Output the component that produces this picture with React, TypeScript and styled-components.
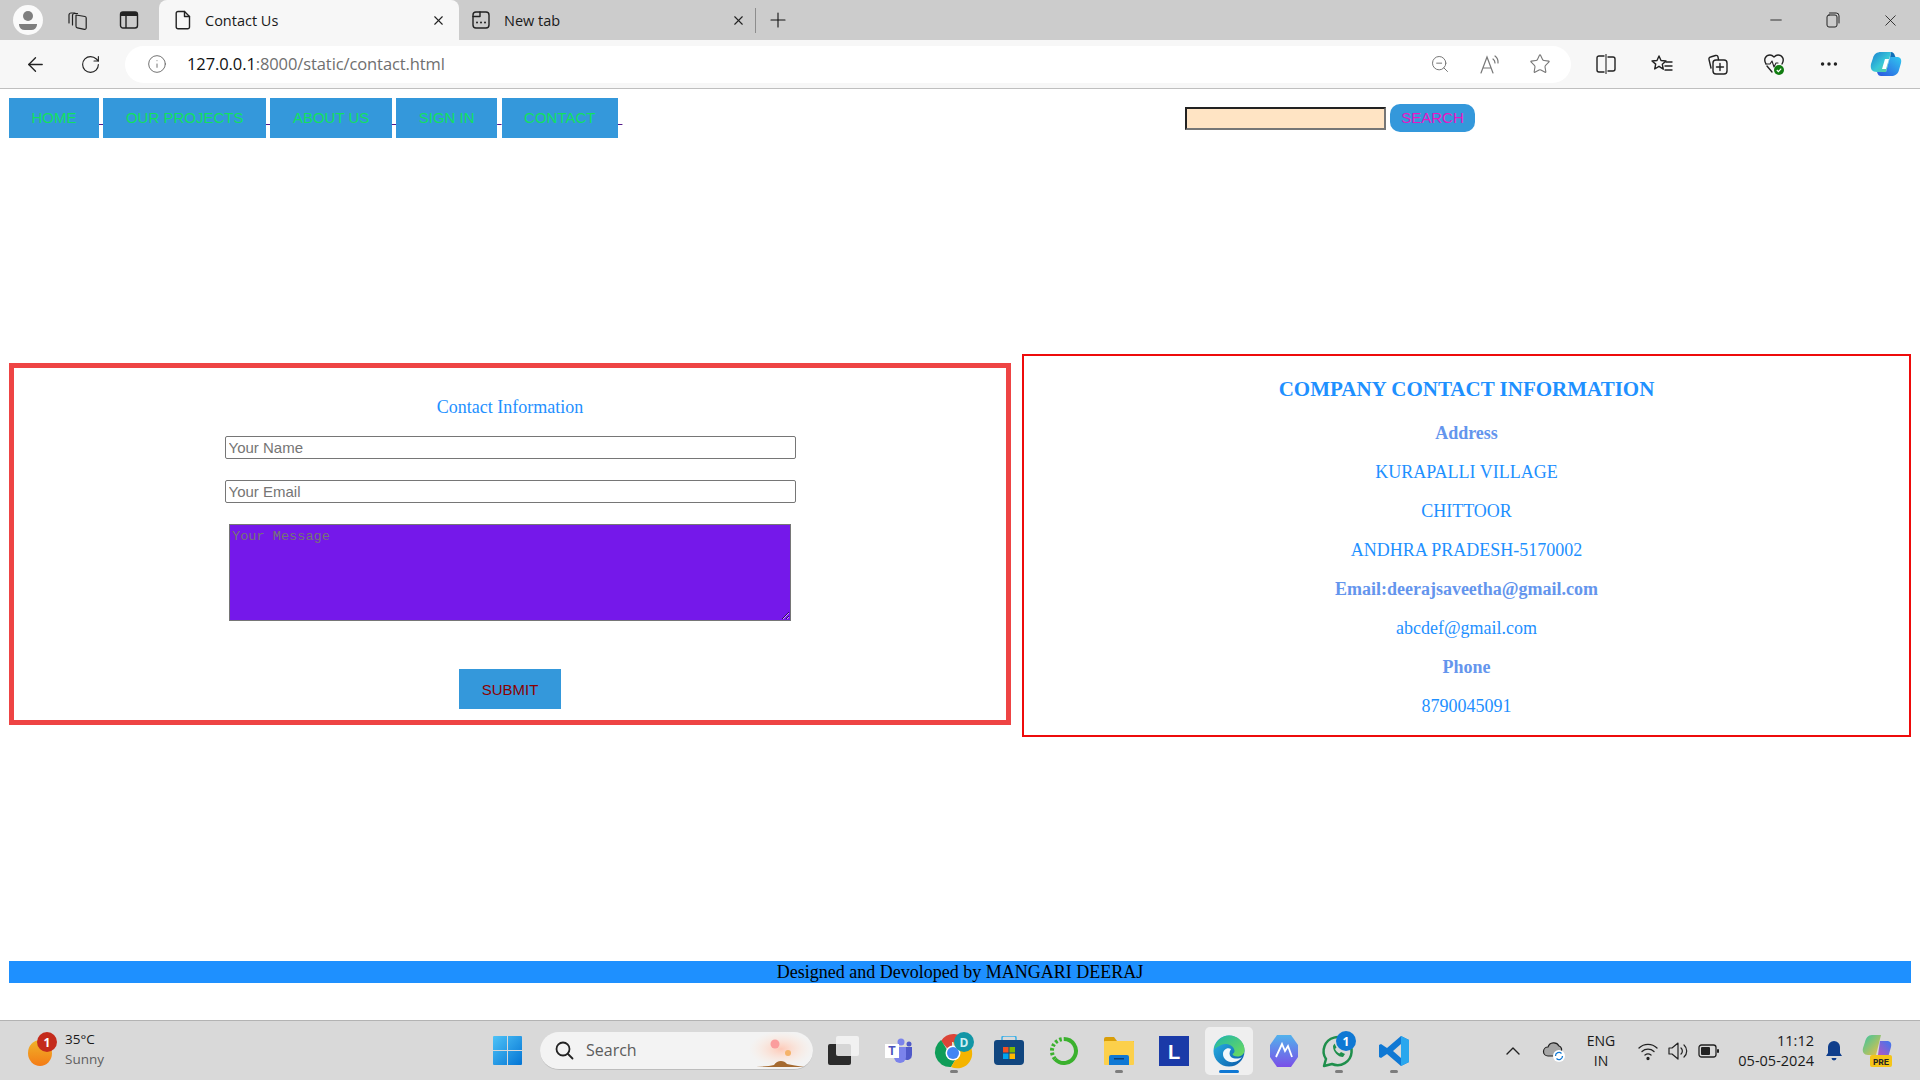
import styled, { createGlobalStyle } from 'styled-components';
import { ArrowLeft, Info, Minus, MoreHorizontal, Plus, RotateCw, Star, X, ZoomOut } from 'lucide-react';

const GlobalStyle = createGlobalStyle`
  html, body {
    margin: 0;
    padding: 0;
    height: 100%;
    background: #fff;
  }
  #root {
    height: 100%;
  }
  * {
    box-sizing: border-box;
  }
`;

const Screen = styled.div`
  width: 1920px;
  height: 1080px;
  display: flex;
  flex-direction: column;
  overflow: hidden;
  font-family: 'Liberation Serif', serif;
`;

/* browser chrome */
const TabBar = styled.div`
  height: 40px;
  background: #ccc;
  display: flex;
  align-items: center;
  padding-left: 3px;
  font-family: 'Open Sans', sans-serif;
`;

const Slot = styled.div<{ $w: number; $ml?: number }>`
  width: ${(p) => p.$w}px;
  margin-left: ${(p) => p.$ml ?? 0}px;
  flex: none;
  display: flex;
  align-items: center;
  justify-content: center;
  position: relative;
`;

const Tab = styled.div<{ $active?: boolean }>`
  width: ${(p) => (p.$active ? 300 : 294)}px;
  height: 40px;
  flex: none;
  display: flex;
  align-items: center;
  margin-left: ${(p) => (p.$active ? 4 : 1)}px;
  padding: ${(p) => (p.$active ? '0 13px 0 16px' : '0 8px 0 12px')};
  background: ${(p) => (p.$active ? '#f7f7f7' : 'transparent')};
  border-radius: 8px 8px 0 0;
  font-size: 14.5px;
  color: #1a1a1a;
`;

const TabLabel = styled.span`
  margin-left: 14px;
  flex: 1;
`;

const TabDivider = styled.div`
  width: 1px;
  height: 25px;
  background: #8d8d8d;
  margin-left: 1px;
`;

const WindowControls = styled.div`
  margin-left: auto;
  display: flex;
  padding-right: 1px;
`;

const Toolbar = styled.div`
  height: 49px;
  background: #f7f7f7;
  border-bottom: 1px solid #bfbfbf;
  display: flex;
  align-items: center;
  padding: 0 4px 0 8px;
  font-family: 'Open Sans', sans-serif;
`;

const AddressPill = styled.div`
  flex: 1;
  height: 37px;
  margin: 0 7px;
  background: #fff;
  border-radius: 19px;
  display: flex;
  align-items: center;
  padding: 0 6px 0 20px;
`;

const Url = styled.div`
  margin-left: 18px;
  padding-bottom: 1px;
  flex: 1;
  font-size: 16.5px;
  letter-spacing: -0.1px;
  color: #6f6f6f;
`;

const UrlHost = styled.span`
  color: #111;
`;

/* page */
const Page = styled.main`
  flex: 1;
  display: flex;
  flex-direction: column;
  padding: 9px 9px 0;
`;

const Header = styled.header`
  display: flex;
  align-items: center;
  height: 40px;
`;

const Nav = styled.nav`
  width: 1176px;
  flex: none;
  white-space: pre;
  font-family: 'Liberation Sans', sans-serif;
  font-size: 16px;
`;

const NavLink = styled.a`
  color: #551a8b;
  text-decoration: underline;
`;

const NavButton = styled.span`
  display: inline-block;
  padding: 11px 22.5px;
  height: 40px;
  line-height: 18px;
  background: #3498db;
  color: #12e05f;
  font-size: 15px;
`;

const SearchInput = styled.input`
  width: 201px;
  height: 23px;
  background: #ffe4c4;
  border: 2px solid;
  border-color: #222 #767676 #767676 #222;
  padding: 0 2px;
`;

const SearchButton = styled.button`
  width: 85px;
  height: 28px;
  margin-left: 4px;
  border: none;
  border-radius: 10px;
  background: #3498db;
  color: #e815c4;
  font-family: 'Liberation Sans', sans-serif;
  font-size: 15px;
  padding: 0 0 2px;
`;

const Panels = styled.div`
  margin-top: 216px;
  display: flex;
  align-items: flex-start;
  gap: 11px;
`;

const FormPanel = styled.form`
  width: 1002px;
  height: 362px;
  margin-top: 9px;
  flex: none;
  border: 5px solid #ee4444;
  display: flex;
  flex-direction: column;
  align-items: center;
  padding-top: 29px;
`;

const FormTitle = styled.h4`
  margin: 0;
  height: 21px;
  line-height: 21px;
  font-size: 18px;
  font-weight: 400;
  color: #1e90ff;
`;

const TextField = styled.input<{ $top: number }>`
  width: 571px;
  height: 23px;
  margin-top: ${(p) => p.$top}px;
  flex: none;
  border: 1px solid #767676;
  border-radius: 2px;
  padding: 0 3px;
  background: #fff;
  font-family: 'Liberation Sans', sans-serif;
  font-size: 15px;

  &::placeholder {
    color: #757575;
  }
`;

const MessageBox = styled.textarea`
  width: 562px;
  height: 97px;
  margin-top: 21px;
  flex: none;
  display: block;
  border: 1px solid #767676;
  border-radius: 0;
  padding: 4px 2px;
  background: #7518ea;
  font-family: 'Liberation Mono', monospace;
  font-size: 13.6px;

  &::placeholder {
    color: #757575;
  }
`;

const SubmitButton = styled.button`
  width: 102px;
  height: 40px;
  margin-top: 48px;
  flex: none;
  border: none;
  padding: 0;
  background: #3498db;
  color: #8b0000;
  font-family: 'Liberation Sans', sans-serif;
  font-size: 15px;
`;

const InfoPanel = styled.section`
  width: 889px;
  height: 383px;
  flex: none;
  border: 2px solid #ee0b0b;
  display: flex;
  flex-direction: column;
  align-items: center;
  padding-top: 20px;
`;

const InfoTitle = styled.h3`
  margin: 0 0 12px;
  height: 26px;
  line-height: 26px;
  font-size: 21px;
  font-weight: 700;
  color: #1e90ff;
`;

const InfoLine = styled.p<{ $strong?: boolean }>`
  margin: 9px 0;
  height: 21px;
  line-height: 21px;
  font-size: 18px;
  font-weight: ${(p) => (p.$strong ? 700 : 400)};
  color: ${(p) => (p.$strong ? '#6495ed' : '#1e90ff')};
`;

const Footer = styled.footer`
  margin-top: 224px;
  height: 22px;
  line-height: 23px;
  background: #1e90ff;
  color: #000;
  text-align: center;
  font-size: 18px;
`;

/* taskbar */
const Taskbar = styled.div`
  height: 60px;
  flex: none;
  background: #d9d9d9;
  border-top: 1px solid #b3b3b3;
  display: flex;
  align-items: center;
  font-family: 'Open Sans', sans-serif;
  color: #1a1a1a;
`;

const Weather = styled.div`
  width: 493px;
  flex: none;
  display: flex;
  align-items: center;
  padding-left: 28px;
`;

const WeatherText = styled.div`
  margin-left: 13px;
  padding-bottom: 3px;
  font-size: 13.5px;
  line-height: 20px;
`;

const Muted = styled.div`
  color: #5f5f5f;
`;

const StartSlot = styled.div`
  width: 47px;
  flex: none;
`;

const SearchPill = styled.div`
  width: 273px;
  height: 38px;
  flex: none;
  margin-right: 3px;
  border-radius: 19px;
  background: #f3f3f3;
  border-bottom: 1px solid #bdbdbd;
  display: flex;
  align-items: center;
  padding-left: 14px;
  font-size: 16px;
  color: #5c5c5c;
  overflow: hidden;
`;

const SearchLabel = styled.span`
  margin-left: 12px;
  flex: 1;
`;

const AppSlot = styled.div<{ $active?: boolean }>`
  width: 55px;
  height: 48px;
  flex: none;
  display: flex;
  align-items: center;
  justify-content: center;
  position: relative;

  ${(p) =>
    p.$active &&
    `
    &::before {
      content: '';
      position: absolute;
      left: 4px;
      right: 3px;
      top: 0;
      bottom: 0;
      background: #efefef;
      border-radius: 5px;
    }
  `}

  & > svg {
    position: relative;
  }
`;

const RunDot = styled.span<{ $active?: boolean }>`
  position: absolute;
  bottom: 2px;
  left: 50%;
  width: ${(p) => (p.$active ? 20 : 8)}px;
  height: 3px;
  margin-left: ${(p) => (p.$active ? -10 : -4)}px;
  border-radius: 2px;
  background: ${(p) => (p.$active ? '#0f78d4' : '#7d7d7d')};
`;

const Tray = styled.div`
  display: flex;
  align-items: center;
  margin-left: 78px;
`;

const TrayText = styled.div<{ $w: number; $ml: number; $right?: boolean; $size: number }>`
  width: ${(p) => p.$w}px;
  margin-left: ${(p) => p.$ml}px;
  flex: none;
  text-align: ${(p) => (p.$right ? 'right' : 'center')};
  font-size: ${(p) => p.$size}px;
  line-height: 20px;
  white-space: nowrap;
`;

const line = { fill: 'none', stroke: '#222', strokeWidth: 1.4, strokeLinecap: 'round', strokeLinejoin: 'round' } as const;

const App: React.FC = () => {
  return (
    <Screen>
      <GlobalStyle />
      <TabBar>
        <Slot $w={50}>
          <svg width="30" height="30" viewBox="0 0 30 30">
            <circle cx="15" cy="15" r="15" fill="#fafafa" />
            <circle cx="15" cy="11" r="5" fill="#7f7f7f" />
            <path d="M6 19h18v1a6 6 0 0 1-6 5h-6a6 6 0 0 1-6-5z" fill="#7f7f7f" />
          </svg>
        </Slot>
        <Slot $w={50}>
          <svg width="24" height="24" viewBox="0 0 24 24" {...line} strokeWidth={1.2}>
            <path d="M3 15V7a2 2 0 0 1 2-2h4" />
            <path d="M6.500 17V7.500a2 2 0 0 1 2-2h3" />
            <path d="M10 7l9 1.500a1.500 1.500 0 0 1 1.200 1.500v10a1.500 1.500 0 0 1-1.800 1.400l-7-1.500a1.800 1.800 0 0 1-1.400-1.700z" />
          </svg>
        </Slot>
        <Slot $w={52}>
          <svg width="20" height="20" viewBox="0 0 20 20">
            <rect x="1.500" y="2" width="17" height="16" rx="2.500" fill="none" stroke="#222" strokeWidth="1.400" />
            <path d="M2 4a2 2 0 0 1 2-2h12a2 2 0 0 1 2 2v2H2z" fill="#222" />
            <path d="M7 6v12" stroke="#222" strokeWidth="1.400" />
          </svg>
        </Slot>
        <Tab $active>
          <svg width="16" height="20" viewBox="0 0 16 20" {...line}>
            <path d="M3 1.500h6.500l5 5V17a1.800 1.800 0 0 1-1.800 1.800H3A1.800 1.800 0 0 1 1.200 17V3.300A1.800 1.800 0 0 1 3 1.500z" />
            <path d="M9.500 1.500v5h5" />
          </svg>
          <TabLabel>Contact Us</TabLabel>
          <X size={15} strokeWidth={1.8} color="#222" />
        </Tab>
        <Tab>
          <svg width="18" height="18" viewBox="0 0 18 18" {...line}>
            <rect x="1" y="1" width="16" height="16" rx="3" />
            <path d="M1 5.500h7V1" />
            <path d="M5 11.500h.01M9 11.500h.01M13 11.500h.01" strokeWidth="2" />
          </svg>
          <TabLabel>New tab</TabLabel>
          <X size={15} strokeWidth={1.8} color="#222" />
        </Tab>
        <TabDivider />
        <Slot $w={44}>
          <Plus size={24} strokeWidth={1.1} color="#111" />
        </Slot>
        <WindowControls>
          <Slot $w={57}>
            <Minus size={18} strokeWidth={1.1} color="#111" />
          </Slot>
          <Slot $w={57}>
            <svg width="14" height="16" viewBox="0 0 14 16" {...line} strokeWidth={1}>
              <rect x="1" y="3" width="10" height="12" rx="2" />
              <path d="M3.500 1h6.700A2.800 2.800 0 0 1 13 3.800V11" />
            </svg>
          </Slot>
          <Slot $w={58}>
            <X size={19} strokeWidth={1} color="#111" />
          </Slot>
        </WindowControls>
      </TabBar>

      <Toolbar>
        <Slot $w={55}>
          <ArrowLeft size={23} strokeWidth={1.4} color="#222" />
        </Slot>
        <Slot $w={55}>
          <RotateCw size={21} strokeWidth={1.3} color="#222" />
        </Slot>
        <AddressPill>
          <Slot $w={24}>
            <Info size={20} strokeWidth={1.1} color="#666" />
          </Slot>
          <Url>
            <UrlHost>127.0.0.1</UrlHost>:8000/static/contact.html
          </Url>
          <Slot $w={50}>
            <ZoomOut size={20} strokeWidth={1.2} color="#777" />
          </Slot>
          <Slot $w={50}>
            <svg width="22" height="22" viewBox="0 0 22 22" fill="none" stroke="#777" strokeWidth="1.200" strokeLinecap="round">
              <path d="M2 20L8 4l6 16M4 15h8" />
              <path d="M14 6a5 5 0 0 1 2 4M16 3a8 8 0 0 1 3 7" />
            </svg>
          </Slot>
          <Slot $w={50}>
            <Star size={22} strokeWidth={1.2} color="#777" />
          </Slot>
        </AddressPill>
        <Slot $w={56}>
          <svg width="20" height="20" viewBox="0 0 20 20" {...line}>
            <path d="M8 2H3a2 2 0 0 0-2 2v12a2 2 0 0 0 2 2h5M12 3h5a2 2 0 0 1 2 2v10a2 2 0 0 1-2 2h-5" />
            <path d="M10 0v20" stroke="#555" />
          </svg>
        </Slot>
        <Slot $w={56}>
          <svg width="22" height="22" viewBox="0 0 22 22" {...line}>
            <path d="M8 3l2 4.500 5 .5-3.700 3.300 1 4.900L8 13.300 3.700 16l1-4.900L1 8l5-.5z" />
            <path d="M15 9h6M14 13h7M14 17h7" />
          </svg>
        </Slot>
        <Slot $w={56}>
          <svg width="22" height="22" viewBox="0 0 22 22" {...line}>
            <path d="M4 15l-2-8.500A2 2 0 0 1 3.500 4l5-1.500a2 2 0 0 1 2.500 1.500l.5 2.500" />
            <rect x="6" y="7" width="14" height="14" rx="3" />
            <path d="M13 10.500v7M9.500 14h7" />
          </svg>
        </Slot>
        <Slot $w={55}>
          <svg width="22" height="24" viewBox="0 0 22 24">
            <path d="M3 12C0 7 3 3 7 3c2 0 3 1 4 2 1-1 2-2 4-2 4 0 7 4 4 9M9 20l-5-6" {...line} />
            <path d="M3 12h4l2-3 2 6 2-4h2" {...line} strokeWidth={1.1} />
            <circle cx="16" cy="18" r="5" fill="#107c10" />
            <path d="M13.800 18l1.600 1.600 2.800-3" fill="none" stroke="#fff" strokeWidth="1.200" />
          </svg>
        </Slot>
        <Slot $w={55}>
          <MoreHorizontal size={22} strokeWidth={1.8} color="#222" />
        </Slot>
        <Slot $w={60}>
          <svg width="32" height="32" viewBox="0 0 32 32">
            <defs>
              <linearGradient id="cpA" x1="0" y1="0" x2="1" y2="1">
                <stop offset="0" stopColor="#1a7fd0" />
                <stop offset="0.55" stopColor="#38c6d8" />
                <stop offset="1" stopColor="#5fd38a" />
              </linearGradient>
              <linearGradient id="cpB" x1="1" y1="0" x2="0" y2="1">
                <stop offset="0" stopColor="#30c8f0" />
                <stop offset="1" stopColor="#2b55e0" />
              </linearGradient>
            </defs>
            <path d="M11 4h10l-5 20H7C2 24 0 21 1 16l2-6c1-4 4-6 8-6z" fill="url(#cpA)" />
            <path d="M21 4c2 0 3 1 4 4l1 2h-6z" fill="#0f6fb8" />
            <path d="M20 9h7c3 0 5 2 4 6l-2 7c-1 4-4 6-8 6H11c-2 0-3-1-4-4h9z" fill="url(#cpB)" />
            <path d="M15 11h4l-3 10h-4z" fill="#fff" />
          </svg>
        </Slot>
      </Toolbar>

      <Page>
        <Header>
          <Nav>
            <NavLink href="#home"><NavButton>HOME</NavButton>{' '}</NavLink>
            <NavLink href="#projects"><NavButton>OUR PROJECTS</NavButton>{' '}</NavLink>
            <NavLink href="#about"><NavButton>ABOUT US</NavButton>{' '}</NavLink>
            <NavLink href="#signin"><NavButton>SIGN IN</NavButton>{' '}</NavLink>
            <NavLink href="#contact"><NavButton>CONTACT</NavButton>{' '}</NavLink>
          </Nav>
          <SearchInput type="text" />
          <SearchButton type="button">SEARCH</SearchButton>
        </Header>

        <Panels>
          <FormPanel>
            <FormTitle>Contact Information</FormTitle>
            <TextField $top={18} type="text" placeholder="Your Name" />
            <TextField $top={21} type="email" placeholder="Your Email" />
            <MessageBox placeholder="Your Message" />
            <SubmitButton type="button">SUBMIT</SubmitButton>
          </FormPanel>
          <InfoPanel>
            <InfoTitle>COMPANY CONTACT INFORMATION</InfoTitle>
            <InfoLine $strong>Address</InfoLine>
            <InfoLine>KURAPALLI VILLAGE</InfoLine>
            <InfoLine>CHITTOOR</InfoLine>
            <InfoLine>ANDHRA PRADESH-5170002</InfoLine>
            <InfoLine $strong>Email:deerajsaveetha@gmail.com</InfoLine>
            <InfoLine>abcdef@gmail.com</InfoLine>
            <InfoLine $strong>Phone</InfoLine>
            <InfoLine>8790045091</InfoLine>
          </InfoPanel>
        </Panels>

        <Footer>Designed and Devoloped by MANGARI DEERAJ</Footer>
      </Page>

      <Taskbar>
        <Weather>
          <Slot $w={24}>
            <svg width="28" height="36" viewBox="0 0 28 36" style={{ overflow: 'visible' }}>
              <defs>
                <linearGradient id="sun" x1="0" y1="0" x2="0" y2="1">
                  <stop offset="0" stopColor="#f0b429" />
                  <stop offset="1" stopColor="#f47b16" />
                </linearGradient>
              </defs>
              <ellipse cx="14" cy="20" rx="12" ry="13" fill="url(#sun)" />
              <circle cx="21" cy="9" r="10" fill="#c42b1c" />
              <text x="21" y="13.500" textAnchor="middle" fontSize="12" fontWeight="700" fill="#fff" fontFamily="'Open Sans', sans-serif">1</text>
            </svg>
          </Slot>
          <WeatherText>
            35°C
            <Muted>Sunny</Muted>
          </WeatherText>
        </Weather>
        <StartSlot>
          <svg width="29" height="29" viewBox="0 0 29 29" style={{ display: 'block' }}>
            <defs>
              <linearGradient id="win" x1="0" y1="0" x2="1" y2="1">
                <stop offset="0" stopColor="#4fc3f7" />
                <stop offset="1" stopColor="#0374d4" />
              </linearGradient>
            </defs>
            <path d="M0 1a1 1 0 0 1 1-1h13v14H0zM15 0h13a1 1 0 0 1 1 1v13H15zM0 15h14v14H1a1 1 0 0 1-1-1zM15 15h14v13a1 1 0 0 1-1 1H15z" fill="url(#win)" />
          </svg>
        </StartSlot>
        <SearchPill>
          <svg width="20" height="20" viewBox="0 0 20 20" fill="none" stroke="#222" strokeWidth="1.800" strokeLinecap="round">
            <circle cx="9" cy="9" r="6.500" />
            <path d="M14 14l4.500 4.500" />
          </svg>
          <SearchLabel>Search</SearchLabel>
          <svg width="70" height="38" viewBox="0 0 70 38">
            <defs>
              <radialGradient id="glow">
                <stop offset="0" stopColor="#ffc4b0" stopOpacity="0.9" />
                <stop offset="1" stopColor="#ffe8d8" stopOpacity="0" />
              </radialGradient>
            </defs>
            <ellipse cx="38" cy="18" rx="32" ry="18" fill="url(#glow)" />
            <circle cx="32" cy="13" r="4.500" fill="#fb9d9d" />
            <circle cx="45" cy="22" r="3" fill="#f5b36a" />
            <path d="M13 36c8-.5 14-1 18-2 3-5 10-5 13-1 5 1 10 2 18 3z" fill="#a56a30" />
          </svg>
        </SearchPill>
        <AppSlot>
          <svg width="32" height="30" viewBox="0 0 32 30">
            <rect x="0" y="8" width="23" height="21" rx="2" fill="#2b2b2b" />
            <rect x="8" y="0" width="23" height="20" rx="2" fill="#f4f4f4" fillOpacity="0.85" />
          </svg>
        </AppSlot>
        <AppSlot>
          <svg width="28" height="26" viewBox="0 0 28 26">
            <circle cx="16" cy="4" r="3.500" fill="#7b83eb" />
            <circle cx="24" cy="6" r="2.500" fill="#5059c9" />
            <path d="M19 9h8v8a5 5 0 0 1-8 4z" fill="#5059c9" />
            <path d="M9 9h12v10a6 6 0 0 1-12 0z" fill="#7b83eb" />
            <rect x="0" y="6" width="14" height="14" fill="#fff" />
            <text x="7" y="17" textAnchor="middle" fontSize="12" fontWeight="700" fill="#4b53bc" fontFamily="'Liberation Sans', sans-serif">T</text>
          </svg>
        </AppSlot>
        <AppSlot>
          <svg width="36" height="36" viewBox="0 0 36 36" style={{ overflow: 'visible' }}>
            <path d="M16 21L5 8a15 15 0 0 1 26 1H16z" fill="#db4437" />
            <path d="M13 20L5 7a15 15 0 0 0 10 27l6-10z" fill="#0f9d58" />
            <path d="M17 9h14a15 15 0 0 1-16 25l8-13z" fill="#f4b400" />
            <circle cx="17" cy="20" r="7.500" fill="#fff" />
            <circle cx="17" cy="20" r="6" fill="#4285f4" />
            <circle cx="28" cy="9" r="10" fill="#1296a6" />
            <text x="28" y="13.500" textAnchor="middle" fontSize="12" fontWeight="700" fill="#cdeff3" fontFamily="'Open Sans', sans-serif">D</text>
          </svg>
          <RunDot />
        </AppSlot>
        <AppSlot>
          <svg width="30" height="30" viewBox="0 0 30 30">
            <path d="M8 5V2a2 2 0 0 1 2-2h10a2 2 0 0 1 2 2v3" fill="none" stroke="#3bb0e8" strokeWidth="1.500" />
            <path d="M0 7a3 3 0 0 1 3-3h24a3 3 0 0 1 3 3v18a4 4 0 0 1-4 4H4a4 4 0 0 1-4-4z" fill="#11467f" />
            <rect x="9" y="11" width="5.500" height="5.500" fill="#f25022" />
            <rect x="15.500" y="11" width="5.500" height="5.500" fill="#7fba00" />
            <rect x="9" y="17.500" width="5.500" height="5.500" fill="#00a4ef" />
            <rect x="15.500" y="17.500" width="5.500" height="5.500" fill="#ffb900" />
          </svg>
        </AppSlot>
        <AppSlot>
          <svg width="30" height="30" viewBox="0 0 30 30" fill="none">
            <path d="M15 3a12 12 0 1 1-9 20" stroke="#3bb12e" strokeWidth="4" />
            <path d="M6 23A12 12 0 0 1 15 3" stroke="#3bb12e" strokeWidth="4" strokeDasharray="2.500 2" />
          </svg>
        </AppSlot>
        <AppSlot>
          <svg width="30" height="28" viewBox="0 0 30 28">
            <path d="M0 2a2 2 0 0 1 2-2h8l3 4h17v4H0z" fill="#d99e09" />
            <rect x="0" y="4" width="30" height="24" rx="1" fill="#fcd04b" />
            <path d="M5 20a2 2 0 0 1 2-2h16a2 2 0 0 1 2 2v8H5z" fill="#0f78d4" />
            <rect x="10" y="21" width="10" height="1.500" fill="#0b3f75" />
          </svg>
          <RunDot />
        </AppSlot>
        <AppSlot>
          <svg width="30" height="30" viewBox="0 0 30 30">
            <rect width="30" height="30" fill="#1a3aa8" />
            <text x="15" y="23" textAnchor="middle" fontSize="20" fontWeight="700" fill="#fff" fontFamily="'Liberation Sans', sans-serif">L</text>
          </svg>
        </AppSlot>
        <AppSlot $active>
          <svg width="32" height="32" viewBox="0 0 32 32">
            <defs>
              <linearGradient id="edgeA" x1="0" y1="0" x2="1" y2="1">
                <stop offset="0" stopColor="#1fb6a8" />
                <stop offset="1" stopColor="#6fdc5a" />
              </linearGradient>
              <linearGradient id="edgeB" x1="0" y1="0" x2="1" y2="1">
                <stop offset="0" stopColor="#2bb8e8" />
                <stop offset="1" stopColor="#0a58a8" />
              </linearGradient>
            </defs>
            <circle cx="16" cy="16" r="15.500" fill="url(#edgeB)" />
            <path d="M1 15C2 6 9 .5 16 .5c9 0 15.500 7 15.500 14.500 0 4-3 6.500-7 6.500-3 0-5-1-5-2.500 2-1 2.500-3 1.500-5C19 9 12 8 8 10c-3 1.500-6 3-7 5z" fill="url(#edgeA)" />
            <path d="M18 14c-4-2-8 1-8 5 0 5 5 9 11 8 3-.5 6-2 8-5-3 2-8 2-11 0-2-2-2-5 0-8z" fill="#f2f8fc" />
          </svg>
          <RunDot $active />
        </AppSlot>
        <AppSlot>
          <svg width="30" height="32" viewBox="0 0 30 32">
            <defs>
              <linearGradient id="lens" x1="0" y1="0" x2="0" y2="1">
                <stop offset="0" stopColor="#52b2ec" />
                <stop offset="1" stopColor="#7a4fe8" />
              </linearGradient>
            </defs>
            <path d="M8 0h14l7 10v12l-7 10H8L1 22V10z" fill="url(#lens)" />
            <path d="M7 22L13 9l3 7 3-5 4 11" fill="none" stroke="#fff" strokeWidth="1.800" />
          </svg>
        </AppSlot>
        <AppSlot>
          <svg width="36" height="38" viewBox="0 0 36 38" style={{ overflow: 'visible' }}>
            <path d="M3 34l2-7a14 14 0 1 1 6 5z" fill="none" stroke="#1f8f4c" strokeWidth="2.500" strokeLinejoin="round" />
            <path d="M12 14c0 6 5 11 10 11l2-3-4-2-1.500 1.500c-2-1-3.500-2.500-4.500-4.500l1.500-1.500-2-4z" fill="#1f8f4c" />
            <circle cx="25" cy="9" r="10" fill="#0f78d4" />
            <text x="25" y="13.500" textAnchor="middle" fontSize="12" fontWeight="700" fill="#fff" fontFamily="'Open Sans', sans-serif">1</text>
          </svg>
          <RunDot />
        </AppSlot>
        <AppSlot>
          <svg width="30" height="30" viewBox="0 0 30 30">
            <path d="M22 0l8 4v22l-8 4-14-12-6 4-2-1V9l2-1 6 4zM22 8l-8 7 8 7z" fill="#0f78d4" />
            <path d="M22 0l8 4v22l-8 4z" fill="#2aa7ee" />
          </svg>
          <RunDot />
        </AppSlot>
        <Tray>
          <Slot $w={28}>
            <svg width="16" height="10" viewBox="0 0 16 10" {...line}>
              <path d="M2 8l6-6 6 6" />
            </svg>
          </Slot>
          <Slot $w={28} $ml={13}>
            <svg width="24" height="24" viewBox="0 0 24 24">
              <path d="M6 17a4.500 4.500 0 0 1 0-9 6 6 0 0 1 11-1 4 4 0 0 1 2 6v4z" fill="#a6a6a6" stroke="#222" strokeWidth="1.200" />
              <circle cx="17" cy="17" r="6" fill="#fff" />
              <path d="M13.500 17a3.500 3.500 0 0 1 6-2.500M20.500 17a3.500 3.500 0 0 1-6 2.500" fill="none" stroke="#0f78d4" strokeWidth="1.300" />
            </svg>
          </Slot>
          <TrayText $w={42} $ml={12} $size={14}>
            ENG
            <br />
            IN
          </TrayText>
          <Slot $w={30} $ml={11}>
            <svg width="22" height="22" viewBox="0 0 22 22" {...line} strokeWidth={1.300}>
              <path d="M2 8a13 13 0 0 1 18 0M5 11.500a9 9 0 0 1 12 0M8 15a5 5 0 0 1 6 0" />
              <circle cx="11" cy="18.500" r="1" fill="#222" />
            </svg>
          </Slot>
          <Slot $w={30}>
            <svg width="22" height="22" viewBox="0 0 22 22" {...line} strokeWidth={1.200}>
              <path d="M2 8v6h3l6 5V3L5 8z" />
              <path d="M14 8a4 4 0 0 1 0 6M17 5a8 8 0 0 1 0 12" />
            </svg>
          </Slot>
          <Slot $w={30} $ml={1}>
            <svg width="22" height="14" viewBox="0 0 22 14">
              <rect x="1" y="1" width="17" height="12" rx="2.500" fill="none" stroke="#222" strokeWidth="1.300" />
              <rect x="3" y="3" width="9" height="8" rx="1" fill="#222" />
              <rect x="19" y="5" width="2" height="4" rx="1" fill="#222" />
            </svg>
          </Slot>
          <TrayText $w={90} $ml={0} $right $size={14.5}>
            11:12
            <br />
            05-05-2024
          </TrayText>
          <Slot $w={30} $ml={5}>
            <svg width="18" height="22" viewBox="0 0 18 22">
              <path d="M9 1a6 6 0 0 1 6 6v6l2 3H1l2-3V7a6 6 0 0 1 6-6z" fill="#0f3e8c" />
              <path d="M6.500 18a2.500 2.500 0 0 0 5 0z" fill="#0f3e8c" />
            </svg>
          </Slot>
          <Slot $w={36} $ml={11}>
            <svg width="32" height="34" viewBox="0 0 32 34">
              <defs>
                <linearGradient id="preA" x1="0" y1="0" x2="1" y2="1">
                  <stop offset="0" stopColor="#37c5a2" />
                  <stop offset="1" stopColor="#f0c040" />
                </linearGradient>
                <linearGradient id="preB" x1="1" y1="0" x2="0" y2="1">
                  <stop offset="0" stopColor="#3a78f0" />
                  <stop offset="1" stopColor="#e04ab0" />
                </linearGradient>
              </defs>
              <path d="M10 1h9l-5 20H6C2 21 0 18 1 14l2-6c1-4 3-7 7-7z" fill="url(#preA)" />
              <path d="M18 7h7c3 0 5 2 4 6l-2 7c-1 4-3 6-7 6h-9l3-5h2z" fill="url(#preB)" />
              <rect x="8" y="21" width="22" height="12" rx="2" fill="#f5c518" />
              <text x="19" y="30.500" textAnchor="middle" fontSize="9" fontWeight="700" fill="#222" fontFamily="'Liberation Mono', monospace">PRE</text>
            </svg>
          </Slot>
        </Tray>
      </Taskbar>
    </Screen>
  );
};

export default App;
